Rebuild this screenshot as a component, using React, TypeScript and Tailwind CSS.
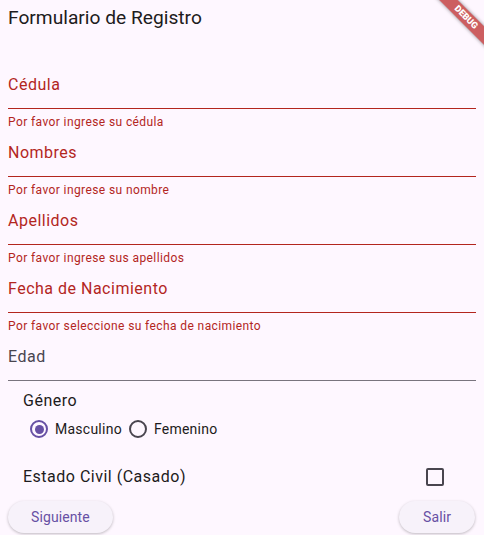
const fields = [
  { label: "Cédula", error: "Por favor ingrese su cédula" },
  { label: "Nombres", error: "Por favor ingrese su nombre" },
  { label: "Apellidos", error: "Por favor ingrese sus apellidos" },
  { label: "Fecha de Nacimiento", error: "Por favor seleccione su fecha de nacimiento" },
];

const Radio = ({ selected }: { selected: boolean }) => (
  <div className="w-8 h-8 flex items-center justify-center">
    <div
      className={
        selected
          ? "w-[18px] h-[18px] rounded-full border-2 border-[#6750a4] flex items-center justify-center"
          : "w-[18px] h-[18px] rounded-full border-2 border-[#49454f]"
      }
    >
      {selected && <div className="w-[9px] h-[9px] rounded-full bg-[#6750a4]" />}
    </div>
  </div>
);

const App = () => {
  return (
    <div className="relative w-full h-[535px] overflow-hidden bg-[#fef7ff] font-['Roboto',sans-serif]">
      {/* debug ribbon */}
      <div className="absolute left-[426px] top-[11px] w-20 h-[13px] rotate-45 bg-[#b71c1c]/70 shadow-[0_0_4px_rgba(0,0,0,0.45)] flex items-center justify-center">
        <span className="text-[9px] leading-none font-black text-white">DEBUG</span>
      </div>

      <div className="h-[35px] flex items-center px-2">
        <div className="text-[19.2px] leading-7 font-normal tracking-normal text-[#1d1b20]">Formulario de Registro</div>
      </div>

      <div className="px-2 mt-[26px]">
        {fields.map((f) => (
          <div key={f.label}>
            <div className="h-12 border-b border-[#b3261e] flex items-center">
              <span className="text-base tracking-[0.5px] text-[#b3261e]">{f.label}</span>
            </div>
            <div className="h-5 pt-[5px] text-xs leading-4 tracking-[0.4px] text-[#b3261e]">{f.error}</div>
          </div>
        ))}

        <div className="h-12 border-b border-[#79747e] flex items-center">
          <span className="text-base tracking-[0.5px] text-[#49454f]">Edad</span>
        </div>

        <div className="pl-[15px] pt-[8px]">
          <p className="text-base leading-6 tracking-[0.5px] text-[#1d1b20]">Género</p>
          <div className="h-8 flex items-center">
            <Radio selected />
            <span className="text-sm tracking-[0.25px] text-[#1d1b20]">Masculino</span>
            <Radio selected={false} />
            <span className="text-sm tracking-[0.25px] text-[#1d1b20]">Femenino</span>
          </div>
        </div>

        <div className="mt-[8px] h-12 pl-[15px] pr-[32px] flex items-center justify-between">
          <span className="text-base tracking-[0.5px] text-[#1d1b20]">Estado Civil (Casado)</span>
          <div className="w-[18px] h-[18px] border-2 border-[#49454f] rounded-[2px]" />
        </div>

        <div className="flex items-center justify-between pr-px">
          <button className="h-8 px-[23px] rounded-full bg-[#f7f2fa] text-sm font-normal tracking-[0.1px] text-[#6750a4] shadow-[0_1px_3px_rgba(0,0,0,0.25)]">
            Siguiente
          </button>
          <button className="h-8 px-6 rounded-full bg-[#f7f2fa] text-sm font-normal tracking-[0.1px] text-[#6750a4] shadow-[0_1px_3px_rgba(0,0,0,0.25)]">
            Salir
          </button>
        </div>
      </div>
    </div>
  );
};

export default App;
